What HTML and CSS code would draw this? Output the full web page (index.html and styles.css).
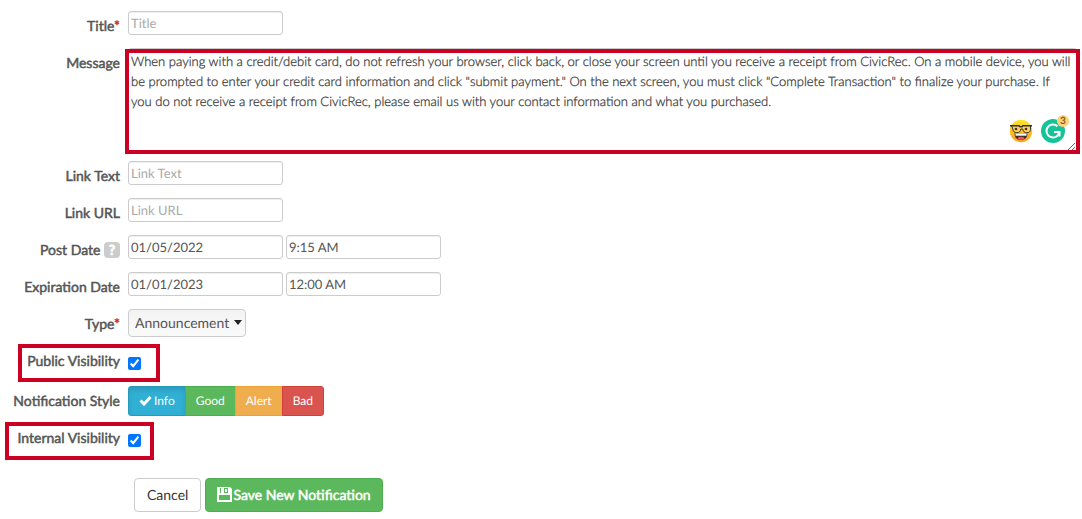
FILE: index.html
```html
<!DOCTYPE html>
<html lang="en">
<head>
    <meta charset="UTF-8">
    <meta name="viewport" content="width=device-width, initial-scale=1.0">
    <title>New Notification</title>
    <link rel="stylesheet" href="styles.css">
</head>
<body>
    <form class="notification-form">
        <div class="form-row">
            <label for="title">Title<span class="required">*</span></label>
            <div class="field"><input type="text" id="title" placeholder="Title" required></div>
        </div>

        <div class="form-row">
            <label for="message">Message</label>
            <div class="field message-box">
                <textarea id="message" spellcheck="false">When paying with a credit/debit card, do not refresh your browser, click back, or close your screen until you receive a receipt from CivicRec. On a mobile device, you will
be prompted to enter your credit card information and click "submit payment." On the next screen, you must click "Complete Transaction" to finalize your purchase. If
you do not receive a receipt from CivicRec, please email us with your contact information and what you purchased.</textarea>
                <div class="message-tools">
                    <svg width="24" height="24" viewBox="0 0 24 24">
                        <defs>
                            <linearGradient id="face" x1="0" y1="0" x2="0" y2="1">
                                <stop offset="0" stop-color="#ffe32e"/>
                                <stop offset="1" stop-color="#f9a01b"/>
                            </linearGradient>
                        </defs>
                        <circle cx="12" cy="12" r="11.2" fill="url(#face)"/>
                        <path d="M5.500 14.500h13c0 4-2.700 6.500-6.500 6.500s-6.500-2.500-6.500-6.500z" fill="#4a2a25"/>
                        <path d="M6.500 14.500h11v2.200h-11z" fill="#fff"/>
                        <ellipse cx="12" cy="19.300" rx="3.200" ry="1.500" fill="#ee5166"/>
                        <path d="M2.500 6.500h7.500l1 1h2l1-1h7.500v4c0 2-1.400 3.200-3.700 3.200s-3.700-1.200-4-3.700h-2c-.3 2.500-1.700 3.700-4 3.700s-3.800-1.200-3.800-3.200z" fill="#fbd45a" stroke="#33302b" stroke-width="1"/>
                        <path d="M1 6.700h9l1 1h2l1-1h9" fill="none" stroke="#33302b" stroke-width="1.400"/>
                        <circle cx="7" cy="10" r="1.300" fill="#4a2a25"/>
                        <circle cx="17" cy="10" r="1.300" fill="#4a2a25"/>
                    </svg>
                    <div class="checker">
                        <svg width="24" height="24" viewBox="0 0 24 24">
                            <circle cx="12" cy="12" r="12" fill="#15c39a"/>
                            <path d="M16.500 7.300A6.500 6.500 0 1 0 18.300 13.500" fill="none" stroke="#fff" stroke-width="2"/>
                            <path d="M13 13h5.500v4.500" fill="none" stroke="#fff" stroke-width="2"/>
                        </svg>
                        <span class="checker-count">3</span>
                    </div>
                </div>
            </div>
        </div>

        <div class="form-row">
            <label for="linkText">Link Text</label>
            <div class="field"><input type="text" id="linkText" placeholder="Link Text"></div>
        </div>

        <div class="form-row">
            <label for="linkUrl">Link URL</label>
            <div class="field"><input type="text" id="linkUrl" placeholder="Link URL"></div>
        </div>

        <div class="form-row">
            <label for="postDate">Post Date <span class="help">?</span></label>
            <div class="field">
                <input type="text" id="postDate" value="01/05/2022">
                <input type="text" aria-label="Post time" value="9:15 AM">
            </div>
        </div>

        <div class="form-row">
            <label for="expirationDate">Expiration Date</label>
            <div class="field">
                <input type="text" id="expirationDate" value="01/01/2023">
                <input type="text" aria-label="Expiration time" value="12:00 AM">
            </div>
        </div>

        <div class="form-row">
            <label for="type">Type<span class="required">*</span></label>
            <div class="field">
                <div class="select-wrap">
                    <select id="type"><option>Announcement</option></select>
                </div>
            </div>
        </div>

        <div class="form-row check-row public">
            <label for="publicVisibility">Public Visibility</label>
            <div class="field"><input type="checkbox" id="publicVisibility" checked></div>
        </div>

        <div class="form-row">
            <span class="row-label" id="styleLabel">Notification Style</span>
            <div class="field style-group" role="group" aria-labelledby="styleLabel">
                <button type="button" class="info"><svg width="13" height="11" viewBox="0 0 13 11"><path d="M1.500 5.500l3.500 3.500 6.500-7" fill="none" stroke="#fff" stroke-width="3"/></svg>Info</button>
                <button type="button" class="good">Good</button>
                <button type="button" class="alert">Alert</button>
                <button type="button" class="bad">Bad</button>
            </div>
        </div>

        <div class="form-row check-row internal">
            <label for="internalVisibility">Internal Visibility</label>
            <div class="field"><input type="checkbox" id="internalVisibility" checked></div>
        </div>

        <div class="actions">
            <button type="button" class="cancel">Cancel</button>
            <button type="submit" class="save"><svg width="15" height="15" viewBox="0 0 15 15"><path fill="#fff" fill-rule="evenodd" d="M0 0h13l2 2v13H0zM2 8v5h11V8zM3 1v5h8V1zM8 2h2v3H8z"/><path d="M4 1h3v5H4z" fill="#fff"/></svg>Save New Notification</button>
        </div>
    </form>
</body>
</html>
```

FILE: styles.css
```css
body {
    font-family: Lato, "Liberation Sans", sans-serif;
    font-size: 14px;
    line-height: 20px;
    color: #555;
    background: #fff;
    margin: 0;
    text-rendering: geometricPrecision;
}
input, textarea, select, button {
    box-sizing: border-box;
    font-family: inherit;
    font-size: 13px;
    color: #555;
    margin: 0;
    text-rendering: inherit;
}
.notification-form {
    padding: 11px 2px 7px 0;
}
.form-row {
    display: grid;
    grid-template-columns: 120px minmax(0, 1fr);
    column-gap: 8px;
    align-items: start;
    min-height: 37px;
    position: relative;
}
.form-row label, .row-label {
    padding-top: 5px;
    text-align: right;
    white-space: nowrap;
    -webkit-text-stroke: 0.5px currentColor;
}
.required {
    color: #c9302c;
}
.help {
    display: inline-block;
    width: 16px;
    height: 16px;
    border-radius: 4px;
    background: #ccc;
    color: #fff;
    font-weight: 900;
    line-height: 16px;
    text-align: center;
}
.field {
    display: flex;
    gap: 3px;
}
input[type="text"] {
    width: 155px;
    height: 24px;
    padding: 0 2px 1px;
    border: 1px solid #ccc;
    border-radius: 3px;
    box-shadow: inset 0 1px 1px rgba(0, 0, 0, 0.07);
}
input::placeholder {
    color: #aaa;
}

/* Message */
.message-box {
    position: relative;
    height: 106px;
    margin-bottom: 7px;
}
.message-box::after {
    content: "";
    position: absolute;
    inset: 1px 0 0 -3px;
    border: 4px solid #cc0022;
    pointer-events: none;
}
textarea {
    display: block;
    width: 100%;
    height: 104px;
    margin-right: 3px;
    padding: 2px 0 2px 2px;
    border: 1px solid #ccc;
    border-radius: 3px;
    color: #444;
    font-weight: 300;
    line-height: 20px;
    -webkit-text-stroke: 0.3px currentColor;
    background: #fff;
    resize: vertical;
    overflow: hidden;
}
.message-tools {
    position: absolute;
    right: 15px;
    bottom: 11px;
    display: flex;
    gap: 8px;
}
.message-tools svg {
    display: block;
}
.checker {
    position: relative;
}
.checker-count {
    position: absolute;
    top: -4px;
    right: -4px;
    width: 12px;
    height: 12px;
    border-radius: 50%;
    background: #fdd27e;
    color: #8a5a10;
    font-size: 10px;
    font-weight: bold;
    line-height: 12px;
    text-align: center;
}

/* Type */
.select-wrap {
    position: relative;
}
select {
    appearance: none;
    width: 118px;
    height: 28px;
    padding: 0 6px 1px;
    border: 1px solid #ccc;
    border-radius: 4px;
    background: linear-gradient(#f3f3f3, #fafafa);
    font-size: 14px;
}
.select-wrap::after {
    content: "";
    position: absolute;
    top: 11px;
    right: 4px;
    border: 4px solid transparent;
    border-top: 5px solid #222;
    border-bottom: 0;
    pointer-events: none;
}

/* Highlighted checkboxes */
.check-row {
    min-height: 40px;
}
.check-row input {
    width: 13px;
    height: 13px;
    margin-top: 11px;
    accent-color: #0075ff;
}
.check-row::after {
    content: "";
    position: absolute;
    box-sizing: border-box;
    height: 38px;
    border: 4px solid #cc0022;
    pointer-events: none;
}
.public::after {
    top: -2px;
    left: 18px;
    width: 142px;
}
.internal::after {
    top: -1px;
    left: 5px;
    width: 149px;
}

/* Buttons */
button {
    display: flex;
    align-items: center;
    border: 1px solid;
    cursor: pointer;
}
.style-group {
    gap: 0;
}
.style-group button {
    height: 30px;
    padding: 0 10px 1px;
    color: #fff;
    font-size: 12px;
}
.style-group button + button {
    margin-left: -1px;
}
.style-group svg {
    margin-right: 2px;
}
.style-group .info {
    background: #31b0d5;
    border-color: #269abc;
    border-radius: 3px 0 0 3px;
    box-shadow: inset 0 3px 5px rgba(0, 0, 0, 0.13);
}
.style-group .good {
    background: #5cb85c;
    border-color: #4cae4c;
}
.style-group .alert {
    background: #f0ad4e;
    border-color: #eea236;
}
.style-group .bad {
    background: #d9534f;
    border-color: #d43f3a;
    border-radius: 0 3px 3px 0;
}
.actions {
    display: flex;
    gap: 4px;
    padding: 15px 0 0 134px;
}
.actions button {
    height: 34px;
    padding: 0 12px 1px;
    border-radius: 4px;
    font-size: 14px;
}
.cancel {
    background: #fff;
    border-color: #ccc;
    color: #333;
}
.actions .save {
    padding: 0 11px 1px;
    background: #5cb85c;
    border-color: #4cae4c;
    color: #fff;
    -webkit-text-stroke: 0.5px currentColor;
}
.save svg {
    margin-right: 1px;
}
```
